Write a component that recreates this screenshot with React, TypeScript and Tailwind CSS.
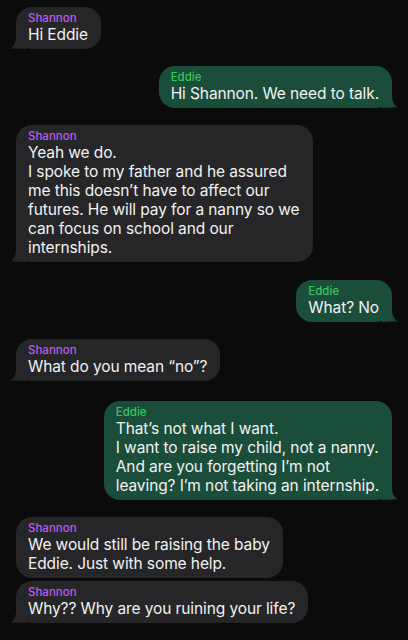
import React from "react";

type Msg = { from: "shannon" | "eddie"; lines: string[]; tail: boolean; gap: string };

const messages: Msg[] = [
  { from: "shannon", lines: ["Hi Eddie"], tail: true, gap: "mt-[7px]" },
  { from: "eddie", lines: ["Hi Shannon. We need to talk."], tail: true, gap: "mt-[17px]" },
  {
    from: "shannon",
    lines: [
      "Yeah we do.",
      "I spoke to my father and he assured",
      "me this doesn’t have to affect our",
      "futures. He will pay for a nanny so we",
      "can focus on school and our",
      "internships.",
    ],
    tail: true,
    gap: "mt-[17px]",
  },
  { from: "eddie", lines: ["What? No"], tail: true, gap: "mt-[18px]" },
  { from: "shannon", lines: ["What do you mean “no”?"], tail: true, gap: "mt-[17px]" },
  {
    from: "eddie",
    lines: [
      "That’s not what I want.",
      "I want to raise my child, not a nanny.",
      "And are you forgetting I’m not",
      "leaving? I’m not taking an internship.",
    ],
    tail: true,
    gap: "mt-[20px]",
  },
  {
    from: "shannon",
    lines: ["We would still be raising the baby", "Eddie. Just with some help."],
    tail: false,
    gap: "mt-[17px]",
  },
  { from: "shannon", lines: ["Why?? Why are you ruining your life?"], tail: true, gap: "mt-[3px]" },
];

export default function App() {
  return (
    <div
      className="w-[408px] h-[640px] overflow-hidden bg-[#0b0b0b] px-4 flex flex-col"
      style={{ fontFamily: "Inter, 'Noto Sans', sans-serif" }}
    >
      {messages.map((m, i) => (
        <Bubble key={i} msg={m} />
      ))}
    </div>
  );
}

function Bubble({ msg }: { msg: Msg }) {
  const mine = msg.from === "eddie";
  const bg = mine ? "bg-[#1b4d3b]" : "bg-[#262628]";
  const fill = mine ? "#1b4d3b" : "#262628";
  return (
    <div className={`flex ${mine ? "justify-end" : "justify-start"} ${msg.gap}`}>
      <div className={`relative rounded-[16px] ${bg} pl-3 pr-[13px] pt-[5px] pb-[5px]`}>
        <div
          className={`text-[11.5px] leading-[13px] font-medium ${mine ? "text-[#34c759]" : "text-[#bf5af2]"}`}
        >
          {mine ? "Eddie" : "Shannon"}
        </div>
        <div className="text-[15.5px] leading-[19px] text-[#f2f2f2] whitespace-nowrap tracking-[-0.1px]">
          {msg.lines.map((l, j) => (
            <div key={j}>{l}</div>
          ))}
        </div>
        {msg.tail && (
          <svg
            width="16"
            height="16"
            viewBox="0 0 16 16"
            className={`absolute bottom-0 ${mine ? "-right-[6px] -scale-x-100" : "-left-[6px]"}`}
          >
            <path d="M6 0 L16 0 L16 16 C11 16 6 15 0 16 C3 14 6 10 6 4 Z" fill={fill} />
          </svg>
        )}
      </div>
    </div>
  );
}
